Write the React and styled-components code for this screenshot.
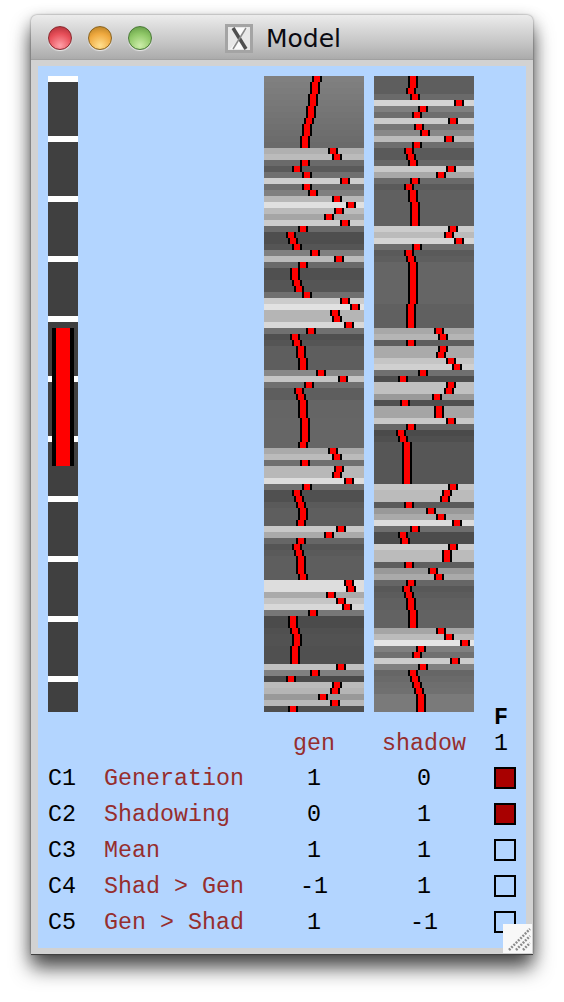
import React from "react";
import styled, { createGlobalStyle } from "styled-components";

const Global = createGlobalStyle`
  html, body { margin: 0; padding: 0; background: #fff; }
  body { width: 564px; height: 1002px; overflow: hidden; }
`;

const Page = styled.div`
  box-sizing: border-box;
  width: 564px;
  height: 1002px;
  padding: 15px 31px 0;
`;

const Window = styled.div`
  position: relative;
  width: 502px;
  height: 939px;
  display: flex;
  flex-direction: column;
  border-radius: 6px 6px 0 0;
  background: #d2d2d2;
  box-shadow: 0 0 2px rgba(0, 0, 0, 0.5), 0 1px 0 #4a4a4a, 0 14px 20px rgba(0, 0, 0, 0.68), 0 4px 16px rgba(0, 0, 0, 0.22);
`;

const TitleBar = styled.div`
  flex: none;
  height: 45px;
  display: flex;
  align-items: center;
  padding: 2px 0 0 17px;
  border-radius: 6px 6px 0 0;
  background: linear-gradient(#ececec 0, #dcdcdc 25%, #c4c4c4 65%, #ababab 100%);
  border-bottom: 1px solid #a0a0a0;
  box-sizing: border-box;
`;

const Lights = styled.div`
  display: flex;
  gap: 16px;
`;

const Light = styled.span`
  width: 24px;
  height: 24px;
  border-radius: 50%;
  box-sizing: border-box;
  border: 1px solid ${(p) => p.$edge};
  background: radial-gradient(circle at 50% 85%, ${(p) => p.$glow} 0, ${(p) => p.$mid} 55%, ${(p) => p.$dark} 100%);
  box-shadow: 0 1px 1px rgba(255, 255, 255, 0.7);
`;

const DocIcon = styled.svg`
  width: 28px;
  height: 29px;
  margin-left: 73px;
  flex: none;
`;

const Title = styled.span`
  margin-left: 13px;
  font: 25px/1 "DejaVu Sans", sans-serif;
  color: #0a0a12;
`;

const Content = styled.div`
  flex: none;
  box-sizing: border-box;
  width: 488px;
  height: 882px;
  margin: 6px 0 0 7px;
  padding: 10px 0 0 10px;
  background: #b3d5ff;
  font: 23.33px/1 "Liberation Mono", monospace;
  color: #000;
`;

const Plots = styled.div`
  display: flex;
  height: 636px;
`;

const TimeBar = styled.div`
  position: relative;
  width: 30px;
  height: 636px;
  margin-right: 186px;
  background: repeating-linear-gradient(#fff 0 6px, #404040 6px 60px);
`;

const TimeMark = styled.div`
  position: absolute;
  left: 4px;
  top: 252px;
  width: 14px;
  height: 138px;
  background: #f00;
  border-left: 4px solid #000;
  border-right: 4px solid #000;
`;

const Matrix = styled.svg`
  display: block;
  width: 100px;
  height: 636px;
  margin-right: 10px;
  shape-rendering: crispEdges;
`;

const HeadRow = styled.div`
  display: flex;
  height: 48px;
`;

const Spacer = styled.div`
  width: 216px;
`;

const ColName = styled.div`
  width: 100px;
  margin-right: 10px;
  padding-top: 21px;
  text-align: center;
  color: #962e2e;
`;

const FactorHead = styled.div`
  display: flex;
  flex-direction: column;
  gap: 3px;
  margin: -5px 0 0 10px;
  width: 22px;
  height: 48px;
  line-height: 23px;
`;

const FactorLine = styled.span`
  display: block;
  height: 23px;
  font-weight: ${(p) => (p.$bold ? 700 : 400)};
`;

const Row = styled.div`
  display: flex;
  align-items: center;
  height: 36px;
`;

const Code = styled.div`
  width: 56px;
  padding-top: 4px;
`;

const Name = styled.div`
  width: 160px;
  padding-top: 4px;
  color: #962e2e;
`;

const Value = styled.div`
  width: 100px;
  margin-right: 10px;
  padding-top: 4px;
  text-align: center;
`;

const Check = styled.div`
  box-sizing: border-box;
  width: 22px;
  height: 22px;
  margin-left: 10px;
  border: 2px solid #000;
  background: ${(p) => (p.$on ? "#a80000" : "transparent")};
`;

const Grip = styled.svg`
  position: absolute;
  right: 1px;
  bottom: 1px;
  width: 29px;
  height: 29px;
`;

const gen = [
  [128,48],[126,46],[124,46],[122,44],[120,44],[118,42],[116,42],[114,40],[112,38],[110,38],[108,36],[106,36],
  [176,64],[187,68],[106,36],[90,28],[112,38],[207,76],[112,38],[128,44],[184,68],[224,82],[187,70],[165,60],[204,76],
  [106,34],[78,22],[78,24],[85,28],[128,46],[187,70],[106,34],[80,26],[80,26],[85,28],[85,30],
  [112,38],[204,76],[226,86],[181,66],[181,68],[216,80],[112,42],[80,26],[85,28],[94,32],[94,32],[94,34],[94,34],
  [136,52],[197,74],[112,40],[94,30],[94,32],[101,34],[101,34],[101,34],[102,36],[102,36],[102,36],[102,36],[102,34],
  [170,64],[187,68],[112,36],[184,70],[184,68],[221,80],[112,38],[80,28],[80,30],[90,32],[94,34],[94,34],[94,32],
  [200,72],[170,60],[102,32],[85,28],[90,30],[94,32],[94,32],[94,32],[94,34],
  [221,80],[221,82],[170,62],[197,72],[216,78],[119,44],[75,24],[75,24],[80,26],[82,28],[82,28],[80,26],[80,26],[80,26],
  [192,72],[128,46],[74,22],[187,68],[181,66],[153,54],[184,66],[79,24],
];

const shadow = [
  [94,34],[94,34],[94,32],[106,36],[213,80],[128,44],[110,38],[204,74],[119,40],[136,46],[187,70],[110,38],
  [90,30],[90,32],[102,34],[200,72],[168,62],[106,36],[90,30],[96,34],[96,34],[96,36],[96,36],[96,36],[96,36],
  [204,74],[187,70],[213,80],[110,38],[90,30],[94,32],[101,34],[101,34],[101,34],[101,34],[101,34],[101,34],[101,34],
  [96,32],[96,32],[96,32],[96,32],[168,60],[181,64],[94,32],[170,64],[170,62],[197,72],[208,78],[112,44],[78,24],
  [192,72],[192,70],[153,58],[80,26],[165,60],[165,60],[200,72],[102,32],[74,22],[79,24],
  [86,28],[86,28],[86,28],[86,28],[86,28],[86,28],[86,28],
  [197,74],[187,68],[187,66],[90,30],[153,52],[170,62],[220,78],[110,36],[76,24],[76,26],[204,74],[187,68],[187,68],
  [94,30],[153,54],[170,60],[102,32],[88,28],[92,30],[96,32],[96,32],[98,34],[98,34],[98,34],
  [165,62],[187,70],[229,86],[128,42],[112,38],[204,76],[128,44],[102,34],[106,36],[110,38],[112,40],[122,42],[122,42],[122,42],
];

const contrasts = [
  { code: "C1", name: "Generation", a: "1", b: "0", on: true },
  { code: "C2", name: "Shadowing", a: "0", b: "1", on: true },
  { code: "C3", name: "Mean", a: "1", b: "1", on: false },
  { code: "C4", name: "Shad > Gen", a: "-1", b: "1", on: false },
  { code: "C5", name: "Gen > Shad", a: "1", b: "-1", on: false },
];

const shade = (v) => `rgb(${v},${v},${v})`;

function DesignColumn({ rows }) {
  return (
    <Matrix viewBox="0 0 100 636">
      {rows.map(([gray, left], i) => (
        <g key={i}>
          <rect x="0" y={i * 6} width="100" height="6" fill={shade(gray)} />
          <rect x={left} y={i * 6} width="10" height="6" fill="#000" />
          <rect x={left + 2} y={i * 6} width="6" height="6" fill="#f00" />
        </g>
      ))}
    </Matrix>
  );
}

export default function App() {
  return (
    <Page>
      <Global />
      <Window>
        <TitleBar>
          <Lights>
            <Light $edge="#8a2a30" $glow="#ffa0a8" $mid="#e8505a" $dark="#a82a32" />
            <Light $edge="#8a6420" $glow="#ffe090" $mid="#f0aa40" $dark="#b07a20" />
            <Light $edge="#4a7a38" $glow="#cdeeaa" $mid="#90c868" $dark="#5c9440" />
          </Lights>
          <DocIcon viewBox="0 0 28 29">
            <rect x="1.5" y="1.5" width="25" height="26" fill="#e8e8e8" stroke="#a4a4a4" strokeWidth="3" />
            <path d="M5 4 H23 L14 14 Z M5 25 H23 L14 15 Z" fill="#fafafa" />
            <path d="M8 4 L21 25" stroke="#505050" strokeWidth="3.5" fill="none" />
            <path d="M21 4 L8 25" stroke="#8a8a8a" strokeWidth="1.5" fill="none" />
          </DocIcon>
          <Title>Model</Title>
        </TitleBar>
        <Content>
          <Plots>
            <TimeBar>
              <TimeMark />
            </TimeBar>
            <DesignColumn rows={gen} />
            <DesignColumn rows={shadow} />
          </Plots>
          <HeadRow>
            <Spacer />
            <ColName>gen</ColName>
            <ColName>shadow</ColName>
            <FactorHead>
              <FactorLine $bold>F</FactorLine>
              <FactorLine>1</FactorLine>
            </FactorHead>
          </HeadRow>
          {contrasts.map((c) => (
            <Row key={c.code}>
              <Code>{c.code}</Code>
              <Name>{c.name}</Name>
              <Value>{c.a}</Value>
              <Value>{c.b}</Value>
              <Check $on={c.on} />
            </Row>
          ))}
        </Content>
        <Grip viewBox="0 0 29 29">
          <rect width="29" height="29" fill="#f8f8f8" />
          <path d="M6 26 L27 5 M13 26 L27 12 M20 26 L27 19" stroke="#8c8c8c" strokeWidth="2.5" strokeDasharray="2 1.2" fill="none" />
        </Grip>
      </Window>
    </Page>
  );
}
